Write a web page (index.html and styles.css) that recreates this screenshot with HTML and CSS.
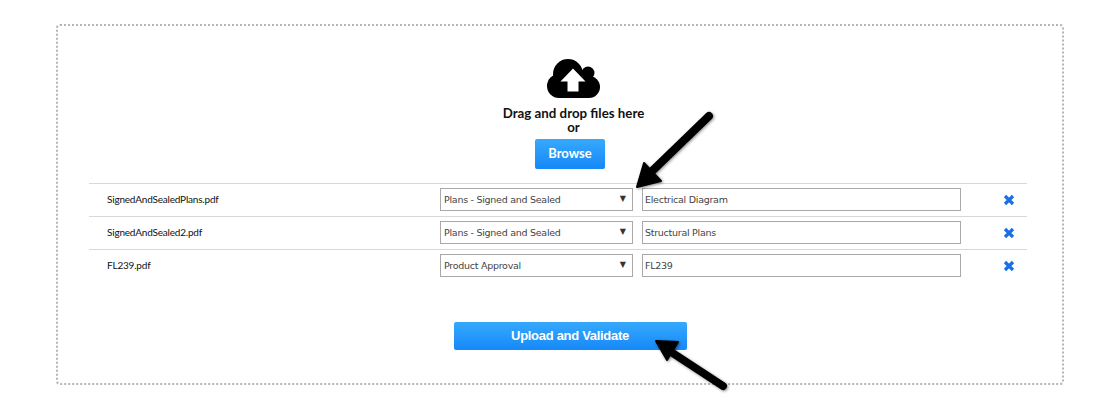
FILE: index.html
```html
<!DOCTYPE html>
<html lang="en">
<head>
<meta charset="utf-8">
<title>Upload files</title>
<link rel="stylesheet" href="styles.css">
</head>
<body>
<main class="dropzone">
  <div class="prompt">
    <svg class="cloud" width="54" height="40" viewBox="0 0 54 40" aria-hidden="true">
      <g fill="#000">
        <circle cx="21" cy="15" r="15"/>
        <circle cx="41" cy="14" r="6.500"/>
        <circle cx="12" cy="27" r="12"/>
        <circle cx="42" cy="28" r="11"/>
        <rect x="12" y="18" width="30" height="21"/>
      </g>
      <path fill="#fff" d="M26 9.500 L38.500 22.500 L31.500 22.500 L31.500 32.500 L20.500 32.500 L20.500 22.500 L13.500 22.500 Z"/>
    </svg>
    <p class="prompt-text">Drag and drop files here<br>or</p>
    <button class="btn btn-browse" type="button">Browse</button>
  </div>

  <div class="files">
    <div class="file-row">
      <span class="file-name">SignedAndSealedPlans.pdf</span>
      <span class="select-wrap"><select class="field select"><option>Plans - Signed and Sealed</option></select><span class="caret">▼</span></span>
      <input class="field text" type="text" value="Electrical Diagram">
      <svg class="remove" width="12" height="12" viewBox="0 0 12 12" aria-hidden="true"><path d="M2 2 L10 10 M10 2 L2 10"/></svg>
    </div>
    <div class="file-row">
      <span class="file-name">SignedAndSealed2.pdf</span>
      <span class="select-wrap"><select class="field select"><option>Plans - Signed and Sealed</option></select><span class="caret">▼</span></span>
      <input class="field text" type="text" value="Structural Plans">
      <svg class="remove" width="12" height="12" viewBox="0 0 12 12" aria-hidden="true"><path d="M2 2 L10 10 M10 2 L2 10"/></svg>
    </div>
    <div class="file-row">
      <span class="file-name">FL239.pdf</span>
      <span class="select-wrap"><select class="field select"><option>Product Approval</option></select><span class="caret">▼</span></span>
      <input class="field text" type="text" value="FL239">
      <svg class="remove" width="12" height="12" viewBox="0 0 12 12" aria-hidden="true"><path d="M2 2 L10 10 M10 2 L2 10"/></svg>
    </div>
  </div>

  <div class="actions">
    <button class="btn btn-upload" type="button">Upload and Validate</button>
  </div>
</main>

<svg class="annotations" width="1110" height="419" viewBox="0 0 1110 419" aria-hidden="true">
  <defs>
    <filter id="soft" x="-20%" y="-20%" width="150%" height="150%">
      <feDropShadow dx="1" dy="1" stdDeviation="1.500" flood-color="#000" flood-opacity=".45"/>
    </filter>
  </defs>
  <g filter="url(#soft)" fill="#000" stroke="#000" stroke-linecap="round" stroke-linejoin="round">
    <path fill="none" stroke-width="8" d="M709 116 L648 175"/>
    <path stroke-width="2" d="M637 187 L644 163 L661 181 Z"/>
    <path fill="none" stroke-width="8" d="M723 386 L668 350"/>
    <path stroke-width="2" d="M656 341 L678 342 L667 360 Z"/>
  </g>
</svg>
</body>
</html>
```
FILE: styles.css
```css
* { box-sizing: border-box; }

html, body {
  margin: 0;
  background: #fff;
}

body {
  position: relative;
  width: 1110px;
  height: 419px;
  overflow: hidden;
  padding: 24px 46px 34px 56px;
  font-family: Lato, "Open Sans", sans-serif;
  color: #111;
}

.dropzone {
  width: 1008px;
  height: 361px;
  border: 2px dotted #b5b5b5;
  border-radius: 4px;
  padding: 33px 36px 0 31px;
  display: flex;
  flex-direction: column;
}

.prompt {
  display: flex;
  flex-direction: column;
  align-items: center;
  padding-left: 28px;
  padding-right: 3px;
  height: 124px;
}

.cloud {
  display: block;
  margin-left: 7px;
}

.prompt-text {
  margin: 7px 0 0 7px;
  font-size: 13.300px;
  font-weight: 700;
  line-height: 14px;
  text-align: center;
  color: #111;
}

.btn {
  display: block;
  border: 0;
  border-radius: 2px;
  color: #fff;
  font-weight: 700;
  background: linear-gradient(#36a9fd, #1688f8);
}

.btn-browse {
  margin-top: 5px;
  width: 70px;
  height: 30px;
  padding: 0 0 2px;
  font-family: Lato, sans-serif;
  font-size: 13px;
}

.files { width: 938px; }

.file-row {
  height: 33px;
  border-top: 1px solid #d8d8d8;
  display: flex;
  align-items: center;
  padding: 0 11px 0 18px;
}

.file-name {
  width: 333px;
  font-size: 10px;
  letter-spacing: -.2px;
  color: #111;
  margin-top: -3px;
}

.select-wrap {
  position: relative;
  display: block;
  width: 193px;
  height: 23px;
  margin: -1px 9px 0 0;
}

.field {
  display: block;
  height: 23px;
  border: 1px solid #a9a9a9;
  border-radius: 0;
  background: #fff;
  color: #444;
  font-family: "DejaVu Sans", sans-serif;
  font-size: 9.500px;
  letter-spacing: -.27px;
  outline: 0;
}

.select {
  width: 100%;
  padding: 0 20px 0 3px;
  appearance: none;
}

.caret {
  position: absolute;
  top: 6px;
  right: 7px;
  font-family: "DejaVu Sans", sans-serif;
  font-size: 8px;
  color: #333;
  pointer-events: none;
}

.text {
  width: 319px;
  margin: -1px 42px 0 0;
  padding: 0 2px;
}

.remove {
  flex: none;
}

.remove path {
  fill: none;
  stroke: #1a6fe6;
  stroke-width: 3.200;
}

.actions {
  display: flex;
  justify-content: center;
  padding: 40px 3px 0 28px;
}

.btn-upload {
  width: 233px;
  height: 28px;
  padding: 0 0 2px;
  font-family: "Liberation Sans", sans-serif;
  font-size: 13px;
  letter-spacing: -.3px;
}

.annotations {
  position: absolute;
  inset: 0;
  pointer-events: none;
}
```
